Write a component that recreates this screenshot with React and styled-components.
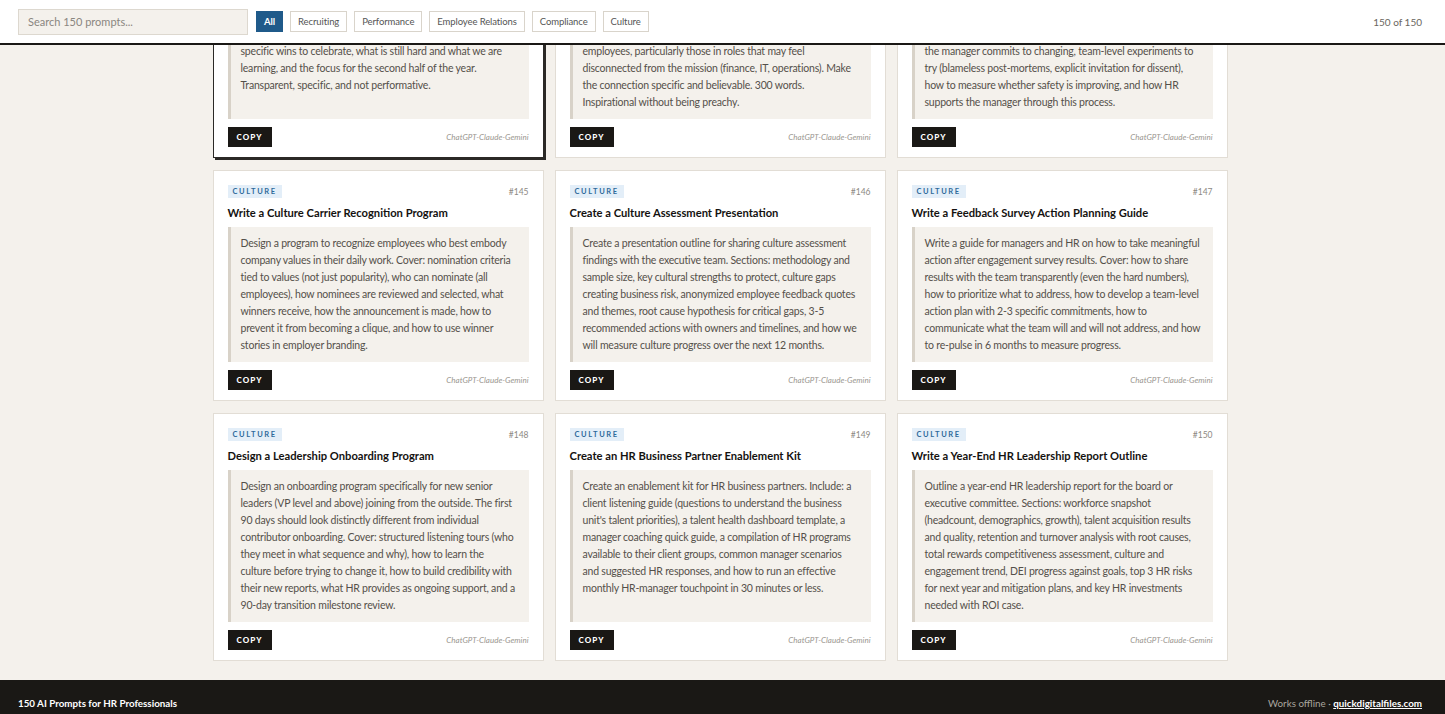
import React, { useLayoutEffect, useRef } from 'react';
import styled, { createGlobalStyle } from 'styled-components';

const GlobalStyle = createGlobalStyle`
    * { box-sizing: border-box; }
    html, body { margin: 0; padding: 0; height: 100%; }
    body {
        font-family: Lato, "Noto Sans", "Liberation Sans", sans-serif;
        background: #f4f1ec;
        color: #1a1815;
    }
`;

const Page = styled.div`
    display: flex;
    flex-direction: column;
    height: 100vh;
    overflow: hidden;
`;

const Header = styled.header`
    display: flex;
    align-items: center;
    gap: 8px;
    height: 45px;
    flex-shrink: 0;
    padding: 0 23px 0 18px;
    background: #fff;
    border-bottom: 2px solid #1a1815;
`;

const Search = styled.input`
    width: 230px;
    height: 26px;
    padding: 0 9px;
    background: #f4f1ec;
    border: 1px solid #ddd8cf;
    font-family: inherit;
    font-size: 11px;
    color: #333;
    outline: none;

    &::placeholder { color: #8a8680; }
`;

const Filters = styled.div`
    display: flex;
    gap: 7px;
`;

const FilterButton = styled.button`
    height: 21px;
    padding: 0 7px;
    font-family: inherit;
    font-size: 9.5px;
    letter-spacing: -0.1px;
    font-weight: ${(p) => (p.active ? 700 : 400)};
    color: ${(p) => (p.active ? '#fff' : '#555')};
    background: ${(p) => (p.active ? '#1f5a8a' : '#fff')};
    border: 1px solid ${(p) => (p.active ? '#1f5a8a' : '#d9d4cb')};
    cursor: pointer;
`;

const Count = styled.span`
    margin-left: auto;
    font-size: 10px;
    color: #6a6660;
`;

const Main = styled.main`
    flex: 1;
    overflow-y: auto;
    padding: 12px 23px 19px 18px;
    scrollbar-width: none;

    &::-webkit-scrollbar { display: none; }
`;

const Grid = styled.div`
    display: grid;
    grid-template-columns: repeat(3, 1fr);
    gap: 12px 11px;
    max-width: 1015px;
    margin: 0 auto;
`;

const Card = styled.article`
    display: flex;
    flex-direction: column;
    padding: 14px 14px 10px;
    background: #fff;
    border: 1px solid ${(p) => (p.highlight ? '#2b2926' : '#e2ddd5')};
    box-shadow: ${(p) => (p.highlight ? '2px 2px 0 #2b2926' : 'none')};
`;

const CardTop = styled.div`
    display: flex;
    justify-content: space-between;
    align-items: center;
`;

const Tag = styled.span`
    padding: 3px 5px;
    background: #e3eef8;
    color: #2e6a9b;
    font-size: 7.5px;
    font-weight: 700;
    letter-spacing: 1.6px;
    line-height: 7px;
`;

const Num = styled.span`
    font-size: 8.5px;
    color: #8d8983;
`;

const Title = styled.h3`
    margin: 8px 0 7px;
    font-size: 11.2px;
    line-height: 14px;
    font-weight: 700;
    color: #141210;
`;

const Prompt = styled.p`
    flex: 1;
    margin: 0;
    padding: 8px 12px 8px 10px;
    background: #f4f1ec;
    border-left: 3px solid #d8d2c8;
    font-size: 10.5px;
    letter-spacing: -0.2px;
    line-height: 17px;
    color: #54504a;
`;

const CardFoot = styled.div`
    display: flex;
    justify-content: space-between;
    align-items: center;
    margin-top: 8px;
`;

const CopyButton = styled.button`
    height: 20px;
    padding: 0 9px;
    background: #1a1815;
    color: #fff;
    border: none;
    font-family: inherit;
    font-size: 8px;
    font-weight: 900;
    letter-spacing: 1.1px;
    cursor: pointer;
`;

const Models = styled.span`
    font-size: 8px;
    font-style: italic;
    color: #9a968f;
`;

const Footer = styled.footer`
    display: flex;
    justify-content: space-between;
    align-items: center;
    height: 34px;
    flex-shrink: 0;
    padding: 11px 23px 0 18px;
    background: #1a1815;
    color: #fff;
    font-size: 9.8px;
`;

const FootTitle = styled.span`
    font-weight: 700;
`;

const FootRight = styled.span`
    color: #a9a59e;

    a {
        color: #fff;
        font-weight: 700;
        text-decoration: underline;
    }
`;

const filters = ['All', 'Recruiting', 'Performance', 'Employee Relations', 'Compliance', 'Culture'];

const prompts = [
    {
        n: 142,
        title: 'Write a Mid-Year Culture Update',
        text: 'Write a mid-year culture update from the CEO to all employees. Cover: progress on our priorities set in January, specific wins to celebrate, what is still hard and what we are learning, and the focus for the second half of the year. Transparent, specific, and not performative.',
    },
    {
        n: 143,
        title: 'Write a Mission Connection Message',
        text: 'Write a message that helps employees see how their daily work connects to the company mission. Tailor it for back-office employees, particularly those in roles that may feel disconnected from the mission (finance, IT, operations). Make the connection specific and believable. 300 words. Inspirational without being preachy.',
    },
    {
        n: 144,
        title: 'Create a Psychological Safety Action Plan',
        text: 'Create an action plan for a team with low psychological safety scores. Include: how to share results with the team, behaviors the manager commits to changing, team-level experiments to try (blameless post-mortems, explicit invitation for dissent), how to measure whether safety is improving, and how HR supports the manager through this process.',
    },
    {
        n: 145,
        title: 'Write a Culture Carrier Recognition Program',
        text: 'Design a program to recognize employees who best embody company values in their daily work. Cover: nomination criteria tied to values (not just popularity), who can nominate (all employees), how nominees are reviewed and selected, what winners receive, how the announcement is made, how to prevent it from becoming a clique, and how to use winner stories in employer branding.',
    },
    {
        n: 146,
        title: 'Create a Culture Assessment Presentation',
        text: 'Create a presentation outline for sharing culture assessment findings with the executive team. Sections: methodology and sample size, key cultural strengths to protect, culture gaps creating business risk, anonymized employee feedback quotes and themes, root cause hypothesis for critical gaps, 3-5 recommended actions with owners and timelines, and how we will measure culture progress over the next 12 months.',
    },
    {
        n: 147,
        title: 'Write a Feedback Survey Action Planning Guide',
        text: 'Write a guide for managers and HR on how to take meaningful action after engagement survey results. Cover: how to share results with the team transparently (even the hard numbers), how to prioritize what to address, how to develop a team-level action plan with 2-3 specific commitments, how to communicate what the team will and will not address, and how to re-pulse in 6 months to measure progress.',
    },
    {
        n: 148,
        title: 'Design a Leadership Onboarding Program',
        text: 'Design an onboarding program specifically for new senior leaders (VP level and above) joining from the outside. The first 90 days should look distinctly different from individual contributor onboarding. Cover: structured listening tours (who they meet in what sequence and why), how to learn the culture before trying to change it, how to build credibility with their new reports, what HR provides as ongoing support, and a 90-day transition milestone review.',
    },
    {
        n: 149,
        title: 'Create an HR Business Partner Enablement Kit',
        text: "Create an enablement kit for HR business partners. Include: a client listening guide (questions to understand the business unit's talent priorities), a talent health dashboard template, a manager coaching quick guide, a compilation of HR programs available to their client groups, common manager scenarios and suggested HR responses, and how to run an effective monthly HR-manager touchpoint in 30 minutes or less.",
    },
    {
        n: 150,
        title: 'Write a Year-End HR Leadership Report Outline',
        text: 'Outline a year-end HR leadership report for the board or executive committee. Sections: workforce snapshot (headcount, demographics, growth), talent acquisition results and quality, retention and turnover analysis with root causes, total rewards competitiveness assessment, culture and engagement trend, DEI progress against goals, top 3 HR risks for next year and mitigation plans, and key HR investments needed with ROI case.',
    },
];

const App = () => {
    const mainRef = useRef(null);

    useLayoutEffect(() => {
        // open at the end of the list
        if (mainRef.current) mainRef.current.scrollTop = mainRef.current.scrollHeight;
    }, []);

    return (
        <Page>
            <GlobalStyle />
            <Header>
                <Search placeholder="Search 150 prompts..." />
                <Filters>
                    {filters.map((f) => (
                        <FilterButton key={f} active={f === 'All' ? 1 : 0}>{f}</FilterButton>
                    ))}
                </Filters>
                <Count>150 of 150</Count>
            </Header>
            <Main ref={mainRef}>
                <Grid>
                    {prompts.map((p) => (
                        <Card key={p.n} highlight={p.n === 142 ? 1 : 0}>
                            <CardTop>
                                <Tag>CULTURE</Tag>
                                <Num>#{p.n}</Num>
                            </CardTop>
                            <Title>{p.title}</Title>
                            <Prompt>{p.text}</Prompt>
                            <CardFoot>
                                <CopyButton>COPY</CopyButton>
                                <Models>ChatGPT-Claude-Gemini</Models>
                            </CardFoot>
                        </Card>
                    ))}
                </Grid>
            </Main>
            <Footer>
                <FootTitle>150 AI Prompts for HR Professionals</FootTitle>
                <FootRight>
                    Works offline {'\u00b7'} <a href="#">quickdigitalfiles.com</a>
                </FootRight>
            </Footer>
        </Page>
    );
};

export default App;
